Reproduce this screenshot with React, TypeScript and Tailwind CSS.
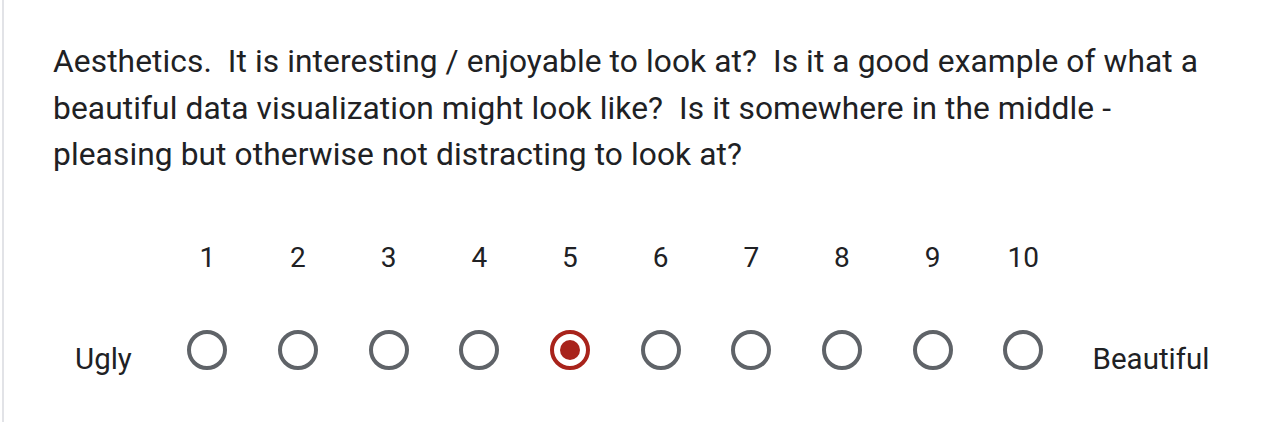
import React, { useState } from "react";

const QUESTION =
  "Aesthetics.\u00a0 It is interesting / enjoyable to look at?\u00a0 Is it a good example of what a beautiful data visualization might look like?\u00a0 Is it somewhere in the middle - pleasing but otherwise not distracting to look at?";

const Radio = ({ checked, onClick }: { checked: boolean; onClick: () => void }) => (
  <button
    onClick={onClick}
    className={`flex h-[40px] w-[40px] items-center justify-center rounded-full border-[4px] ${
      checked ? "border-[#a8231b]" : "border-[#5f6368]"
    }`}
  >
    {checked && <span className="h-[20px] w-[20px] rounded-full bg-[#a8231b]" />}
  </button>
);

export default function App() {
  const [value, setValue] = useState<number>(5);
  const nums = [1, 2, 3, 4, 5, 6, 7, 8, 9, 10];

  return (
    <div className="h-[422px] w-[1276px] bg-white font-['Roboto',sans-serif] text-[#202124]">
      <div className="ml-[2px] h-full border-l-2 border-[#e2e3e7] pl-[49px] pt-[39px]">
        <div className="w-[1170px] text-[31.7px] leading-[46.5px] tracking-[0.1px]">{QUESTION}</div>

        <div className="mt-[63px] flex">
          <div className="w-[109px]" />
          {nums.map((n) => (
            <div key={n} className="flex w-[90.67px] justify-center text-[28px] leading-[32px]">
              {n}
            </div>
          ))}
        </div>

        <div className="mt-[56px] flex items-start">
          <div className="w-[109px] pl-[22px] pt-[13px] text-[29.5px] leading-[32px]">Ugly</div>
          {nums.map((n) => (
            <div key={n} className="flex w-[90.67px] justify-center">
              <Radio checked={value === n} onClick={() => setValue(n)} />
            </div>
          ))}
          <div className="pl-[24px] pt-[13px] text-[29.5px] leading-[32px]">Beautiful</div>
        </div>
      </div>
    </div>
  );
}
